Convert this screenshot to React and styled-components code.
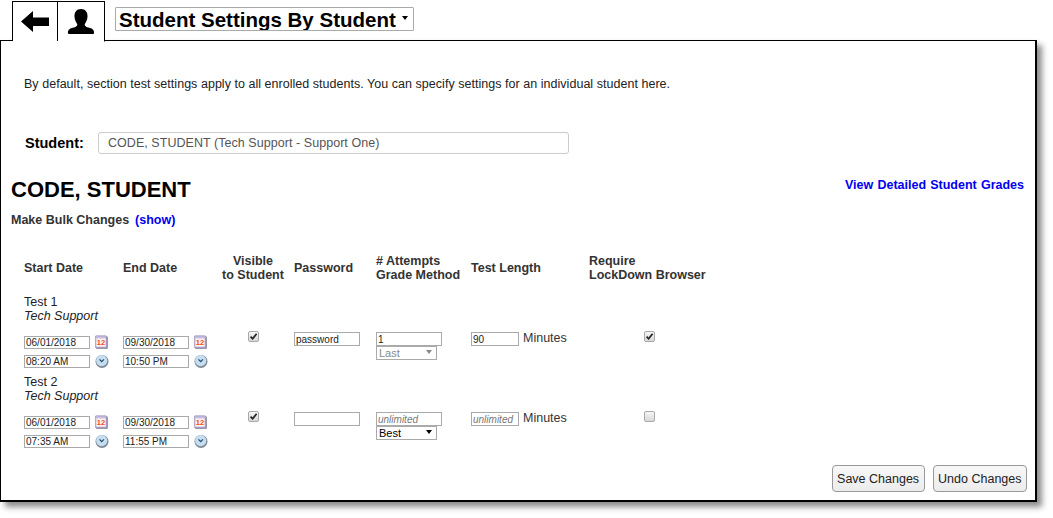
import React from 'react';
import styled, {createGlobalStyle} from "styled-components";

const GlobalStyle = createGlobalStyle`
    html, body {
        margin: 0;
        padding: 0;
        background: #fff;
        font-family: "Liberation Sans", Arial, sans-serif;
        color: #222;
    }
`;

const COLUMNS = '99px 97px 74px 82px 95px 118px 120px';

const Page = styled.div`
    width: 1053px;
    height: 518px;
    overflow: hidden;
`;

const TabBar = styled.div`
    display: flex;
    align-items: flex-start;
    height: 40px;
    padding-left: 12px;
    position: relative;
    z-index: 1;
`;

const Tab = styled.div`
    width: ${({active}) => active ? '47px' : '46px'};
    height: ${({active}) => active ? '41px' : '40px'};
    margin-top: 1px;
    box-sizing: border-box;
    border: 1px solid #000;
    border-left-width: ${({active}) => active ? '0' : '1px'};
    border-bottom: ${({active}) => active ? '1px solid #fff' : '0'};
    background: #fff;
    display: flex;
    align-items: center;
    justify-content: center;
`;

const TitleWrap = styled.div`
    position: relative;
    margin: 7px 0 0 10px;
`;

const TitleSelect = styled.select`
    appearance: none;
    display: block;
    width: 299px;
    height: 24px;
    box-sizing: border-box;
    padding: 0 0 0 3px;
    border: 1px solid #aaa;
    border-radius: 1px;
    background: #fff;
    color: #000;
    font: bold 20.5px "Liberation Sans", Arial, sans-serif;
`;

const Caret = styled.span`
    position: absolute;
    top: ${({top}) => top}px;
    right: ${({right}) => right}px;
    width: 0;
    height: 0;
    border-left: ${({size}) => size}px solid transparent;
    border-right: ${({size}) => size}px solid transparent;
    border-top: ${({size}) => size + 1}px solid ${({muted}) => muted ? '#888' : '#000'};
    pointer-events: none;
`;

const Panel = styled.div`
    width: 1037px;
    height: 462px;
    box-sizing: border-box;
    border: 1px solid #000;
    border-right-width: 2px;
    border-bottom-width: 2px;
    box-shadow: 5px 5px 6px rgba(0, 0, 0, 0.45);
    background: #fff;
    padding-top: 36px;
    display: flex;
    flex-direction: column;
`;

const Intro = styled.p`
    margin: 0 0 0 23px;
    font-size: 12.5px;
    line-height: 14px;
    letter-spacing: 0.033px;
`;

const StudentRow = styled.div`
    display: flex;
    align-items: center;
    margin: 41px 0 0 24px;
`;

const StudentLabel = styled.label`
    width: 73px;
    font-size: 14.5px;
    font-weight: bold;
    color: #000;
`;

const StudentInput = styled.input`
    width: 471px;
    height: 22px;
    box-sizing: border-box;
    padding: 0 9px;
    border: 1px solid #ccc;
    border-radius: 3px;
    color: #555;
    font: 12.5px "Liberation Sans", Arial, sans-serif;
    letter-spacing: 0.05px;
`;

const NameRow = styled.div`
    display: flex;
    justify-content: space-between;
    margin: 24px 11px 0 10px;
`;

const StudentName = styled.h1`
    margin: 0;
    font-size: 22px;
    line-height: 24px;
    color: #000;
`;

const DetailLink = styled.a`
    color: #00e;
    font-size: 12.5px;
    font-weight: bold;
    line-height: 14px;
    word-spacing: 0.7px;
`;

const BulkRow = styled.div`
    display: flex;
    gap: 6px;
    margin: 11px 0 0 10px;
    font-size: 12.5px;
    font-weight: bold;
    line-height: 14px;
    color: #333;
`;

const ShowLink = styled.a`
    color: #00e;
`;

const TableHead = styled.div`
    display: grid;
    grid-template-columns: ${COLUMNS};
    align-items: center;
    margin: 26px 0 0 23px;
    height: 28px;
    padding-top: 1px;
    box-sizing: border-box;
    font-size: 12.5px;
    font-weight: bold;
    line-height: 14px;
    color: #333;
`;

const HeadCell = styled.div`
    text-align: ${({center}) => center ? 'center' : 'left'};
    white-space: nowrap;
    padding-right: ${({inset}) => inset || 0}px;
`;

const TestList = styled.div`
    margin: 13px 0 0 23px;
`;

const TestBlock = styled.div`
    height: 80px;
`;

const TestName = styled.div`
    box-sizing: border-box;
    font-size: 12.5px;
    line-height: 14px;
    height: 28px;
    padding-top: 1px;
    margin-bottom: 10px;
`;

const TestRow = styled.div`
    display: grid;
    grid-template-columns: ${COLUMNS};
    align-items: start;
`;

const DateCell = styled.div`
    display: grid;
    grid-template-columns: 66px 18px;
    column-gap: 5px;
    row-gap: 5px;
    padding-top: 3px;
    align-items: center;
`;

const CheckCell = styled.div`
    display: flex;
    justify-content: center;
    padding-right: ${({inset}) => inset || 0}px;
`;

const Field = styled.input`
    display: block;
    width: ${({w}) => w || 66}px;
    height: ${({h}) => h || 14}px;
    box-sizing: border-box;
    padding: 0 1px;
    border: 1px solid #aaa;
    border-radius: 0;
    outline: 0;
    background: #fff;
    color: #222;
    font: ${({hint}) => hint ? 'italic ' : ''}10px "Liberation Sans", Arial, sans-serif;
    &::placeholder {
        color: #777;
        opacity: 1;
    }
`;

const MethodWrap = styled.div`
    position: relative;
    width: 61px;
`;

const MethodSelect = styled.select`
    appearance: none;
    display: block;
    width: 61px;
    height: 14px;
    box-sizing: border-box;
    padding: 0 0 0 2px;
    border: 1px solid #aaa;
    border-radius: 0;
    background: #fff;
    color: ${({disabled}) => disabled ? '#888' : '#000'};
    font: 11px "Liberation Sans", Arial, sans-serif;
    opacity: 1;
`;

const LengthCell = styled.div`
    display: flex;
    align-items: flex-start;
    gap: 4px;
    font-size: 12.5px;
    line-height: 12px;
    color: #333;
`;

const CheckBox = styled.span`
    display: flex;
    align-items: center;
    justify-content: center;
    width: 9px;
    height: 9px;
    margin-top: -1px;
    border: 1px solid #a9a9a9;
    border-radius: 2px;
    background: linear-gradient(#f6f6f6, #d8d8d8);
`;

const Footer = styled.div`
    display: flex;
    justify-content: flex-end;
    gap: 8px;
    margin: auto 8px 8px 0;
`;

const ActionButton = styled.button`
    height: 27px;
    padding: 0 4.5px;
    border: 1px solid #999;
    border-radius: 4px;
    background: linear-gradient(#f8f8f8, #ececec);
    color: #222;
    font: 12.5px "Liberation Sans", Arial, sans-serif;
`;

const BackIcon = () => (
    <svg width="28" height="21" viewBox="0 0 28 21">
        <path d="M0 10.5 L12 0 V6.5 H28 V15 H12 V21 Z" fill="#000"/>
    </svg>
);

const UserIcon = () => (
    <svg width="28" height="25" viewBox="0 0 30 28" preserveAspectRatio="none">
        <path
            d="M15 0 C20 0 22 4 22 8 C22 12 20 15 19 17 C19 19 20 20 24 21 C28 22 29 24 29 27 Q29 28 28 28 H2 Q1 28 1 27 C1 24 2 22 6 21 C10 20 11 19 11 17 C10 15 8 12 8 8 C8 4 10 0 15 0 Z"
            fill="#000"/>
    </svg>
);

const CalendarIcon = () => (
    <svg width="13" height="14" viewBox="0 0 13 14">
        <rect x="1" y="1.5" width="12" height="12.5" rx="1" fill="#9c9ca6"/>
        <rect x="0.3" y="0.8" width="11.4" height="12" rx="1" fill="#c6bde0" stroke="#8a81a8" strokeWidth="0.6"/>
        <rect x="1.5" y="3.5" width="9" height="8" fill="#fff6ee"/>
        <text x="6" y="10.4" fontSize="7.5" fontWeight="bold" textAnchor="middle" fill="#f0481c"
              fontFamily="Liberation Sans, Arial, sans-serif">12</text>
    </svg>
);

const ClockIcon = () => (
    <svg width="14" height="14" viewBox="0 0 14 14">
        <circle cx="7" cy="7.4" r="6.5" fill="#7f8994"/>
        <circle cx="6.7" cy="6.6" r="5.6" fill="#c4def2"/>
        <path d="M4.5 5.4 L6.7 7.6 L8.9 5.4" fill="none" stroke="#2c4a6b" strokeWidth="1.3"/>
    </svg>
);

const CheckMark = () => (
    <svg width="9" height="9" viewBox="0 0 9 9">
        <path d="M1.6 4.6 L3.6 6.8 L7.6 1.8" fill="none" stroke="#222" strokeWidth="1.7"/>
    </svg>
);

const tests = [
    {
        name: 'Test 1', start: '06/01/2018', startTime: '08:20 AM', end: '09/30/2018', endTime: '10:50 PM',
        visible: true, password: 'password', attempts: '1', method: 'Last', methodDisabled: true, length: '90', lockdown: true,
    },
    {
        name: 'Test 2', start: '06/01/2018', startTime: '07:35 AM', end: '09/30/2018', endTime: '11:55 PM',
        visible: true, password: '', attempts: '', method: 'Best', methodDisabled: false, length: '', lockdown: false,
    },
];

const DateFields = ({date, time}) => (
    <DateCell>
        <Field h={13} defaultValue={date}/>
        <CalendarIcon/>
        <Field h={13} defaultValue={time}/>
        <ClockIcon/>
    </DateCell>
);

const App = () => {
    return (
        <Page>
            <GlobalStyle/>
            <TabBar>
                <Tab><BackIcon/></Tab>
                <Tab active><UserIcon/></Tab>
                <TitleWrap>
                    <TitleSelect defaultValue={'student'}>
                        <option value={'student'}>Student Settings By Student</option>
                    </TitleSelect>
                    <Caret top={9} right={6} size={3}/>
                </TitleWrap>
            </TabBar>
            <Panel>
                <Intro>By default, section test settings apply to all enrolled students. You can specify settings for an individual student here.</Intro>
                <StudentRow>
                    <StudentLabel>Student:</StudentLabel>
                    <StudentInput defaultValue={'CODE, STUDENT (Tech Support - Support One)'}/>
                </StudentRow>
                <NameRow>
                    <StudentName>CODE, STUDENT</StudentName>
                    <DetailLink>View Detailed Student Grades</DetailLink>
                </NameRow>
                <BulkRow>
                    <span>Make Bulk Changes</span>
                    <ShowLink>(show)</ShowLink>
                </BulkRow>
                <TableHead>
                    <HeadCell>Start Date</HeadCell>
                    <HeadCell>End Date</HeadCell>
                    <HeadCell center inset={8}>Visible<br/>to Student</HeadCell>
                    <HeadCell>Password</HeadCell>
                    <HeadCell># Attempts<br/>Grade Method</HeadCell>
                    <HeadCell>Test Length</HeadCell>
                    <HeadCell>Require<br/>LockDown Browser</HeadCell>
                </TableHead>
                <TestList>
                    {tests.map((test) => (
                        <TestBlock key={test.name}>
                            <TestName>{test.name}<br/><i>Tech Support</i></TestName>
                            <TestRow>
                                <DateFields date={test.start} time={test.startTime}/>
                                <DateFields date={test.end} time={test.endTime}/>
                                <CheckCell inset={8}>
                                    <CheckBox>{test.visible && <CheckMark/>}</CheckBox>
                                </CheckCell>
                                <div><Field defaultValue={test.password}/></div>
                                <div>
                                    <Field defaultValue={test.attempts} placeholder={'unlimited'} hint={!test.attempts}/>
                                    <MethodWrap>
                                        <MethodSelect defaultValue={test.method} disabled={test.methodDisabled}>
                                            <option>{test.method}</option>
                                        </MethodSelect>
                                        <Caret top={4} right={5} size={3.5} muted={test.methodDisabled}/>
                                    </MethodWrap>
                                </div>
                                <LengthCell>
                                    <Field w={48} defaultValue={test.length} placeholder={'unlimited'} hint={!test.length}/>
                                    <span>Minutes</span>
                                </LengthCell>
                                <CheckCell>
                                    <CheckBox>{test.lockdown && <CheckMark/>}</CheckBox>
                                </CheckCell>
                            </TestRow>
                        </TestBlock>
                    ))}
                </TestList>
                <Footer>
                    <ActionButton>Save Changes</ActionButton>
                    <ActionButton>Undo Changes</ActionButton>
                </Footer>
            </Panel>
        </Page>
    );
};

export default App;
